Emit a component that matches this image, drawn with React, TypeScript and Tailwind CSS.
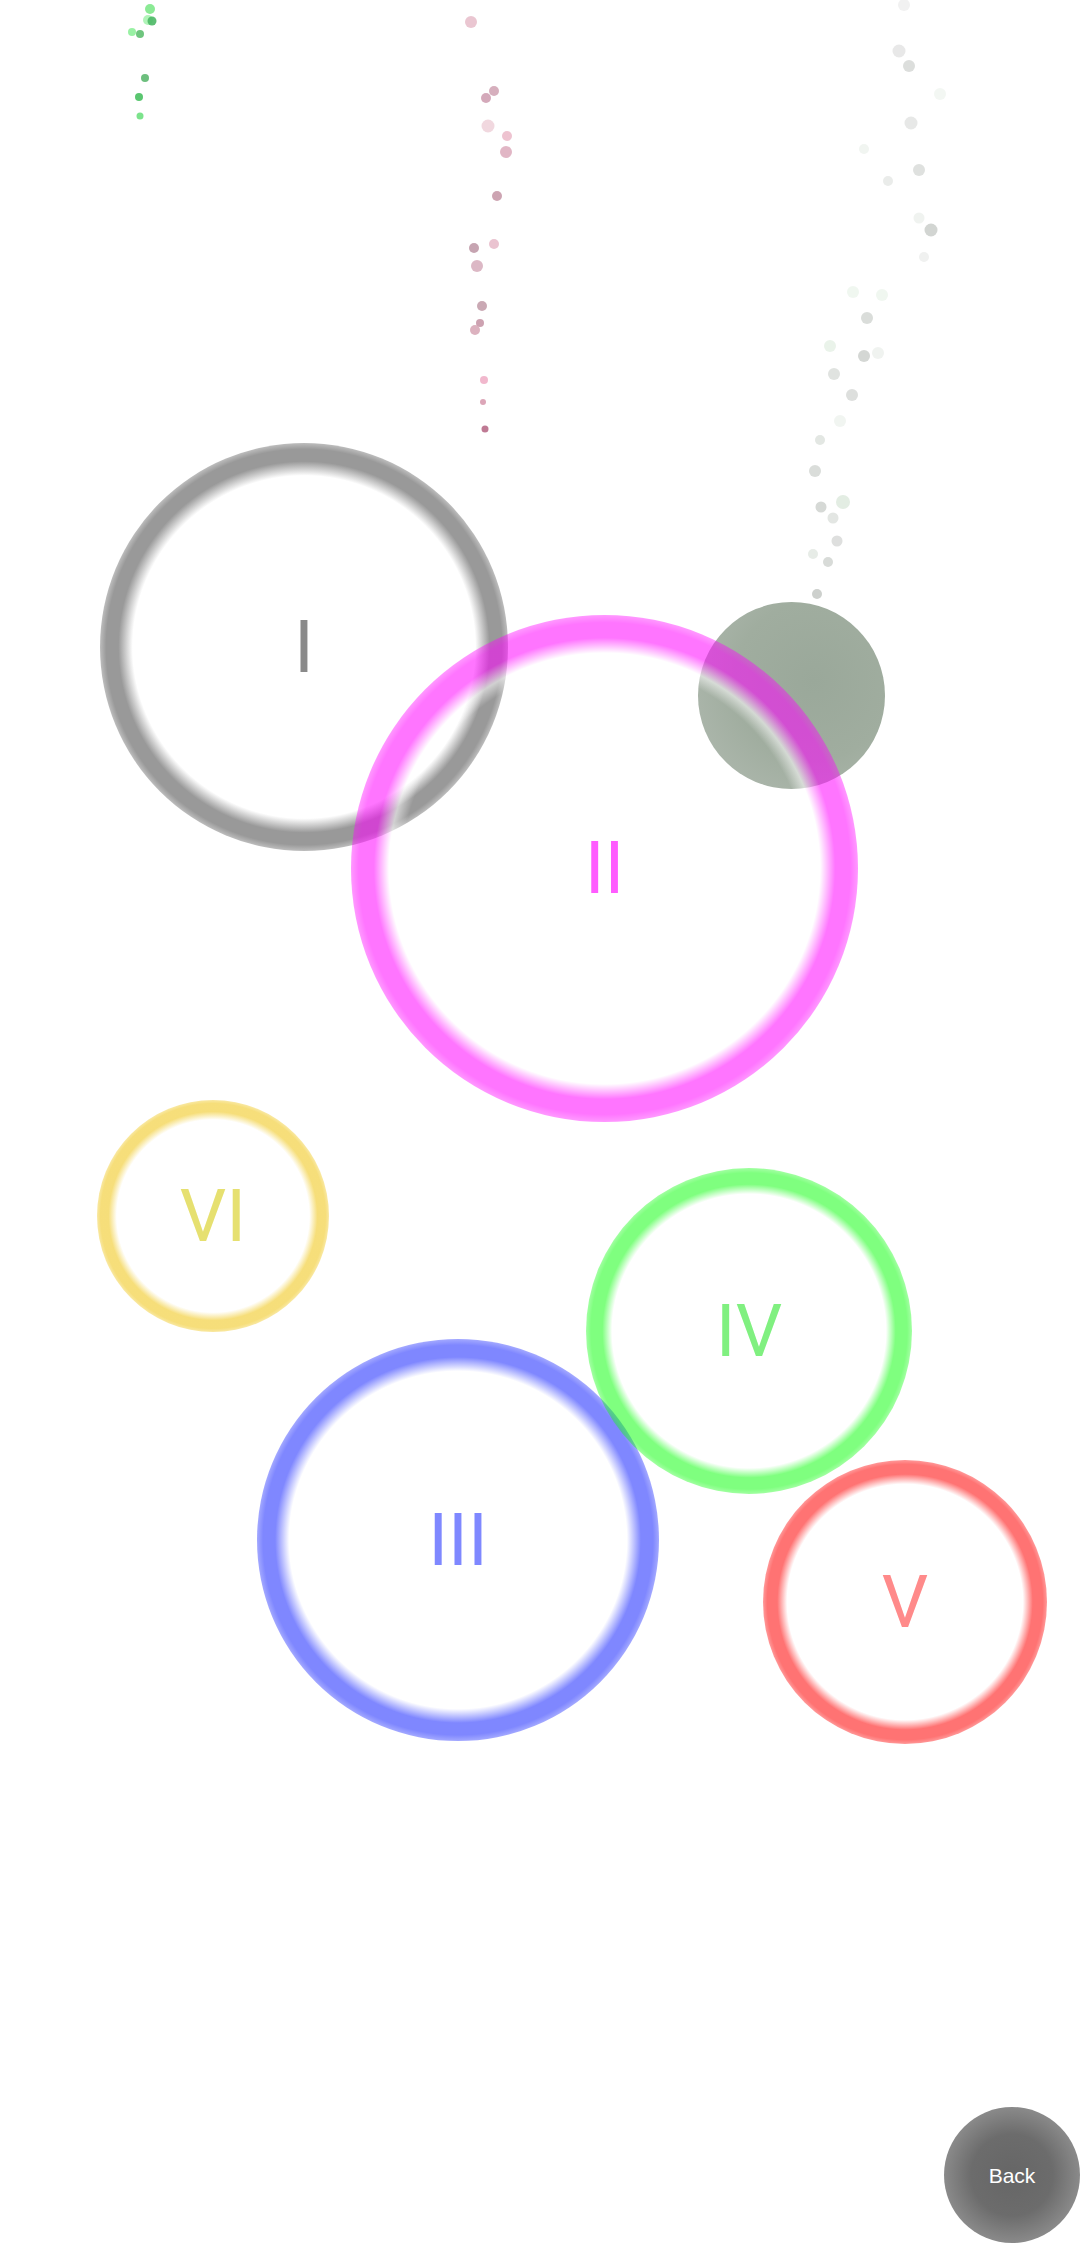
import React from 'react';

type Bubble = {
  label: string;
  box: string;
  ring: string;
  text: string;
};

// drawn in this order: later rings sit over earlier ones
const bubbles: Bubble[] = [
  {
    label: 'I',
    box: 'left-[100px] top-[443px] h-[408px] w-[408px]',
    ring: 'bg-[image:radial-gradient(circle_closest-side,transparent_79%,rgba(255,255,255,0.55)_84%,rgba(0,0,0,0.4)_91%,rgba(0,0,0,0.4)_97%,rgba(0,0,0,0.26)_100%)]',
    text: 'text-[#8a8a8a]',
  },
  {
    label: 'II',
    box: 'left-[351px] top-[615px] h-[507px] w-[507px]',
    ring: 'bg-[image:radial-gradient(circle_closest-side,transparent_80%,rgba(255,255,255,0.55)_85%,rgba(255,0,255,0.54)_91%,rgba(255,0,255,0.54)_97%,rgba(255,0,255,0.4)_100%)]',
    text: 'text-[#ff5cff]',
  },
  {
    label: 'VI',
    box: 'left-[97px] top-[1100px] h-[232px] w-[232px]',
    ring: 'bg-[image:radial-gradient(circle_closest-side,transparent_78%,rgba(255,255,255,0.55)_83%,rgba(238,192,0,0.52)_90%,rgba(238,192,0,0.52)_97%,rgba(238,192,0,0.36)_100%)]',
    text: 'text-[#e6e070]',
  },
  {
    label: 'III',
    box: 'left-[257px] top-[1339px] h-[402px] w-[402px]',
    ring: 'bg-[image:radial-gradient(circle_closest-side,transparent_79%,rgba(255,255,255,0.55)_84%,rgba(0,16,255,0.5)_91%,rgba(0,16,255,0.5)_97%,rgba(0,16,255,0.36)_100%)]',
    text: 'text-[#7f88ff]',
  },
  {
    label: 'IV',
    box: 'left-[586px] top-[1168px] h-[326px] w-[326px]',
    ring: 'bg-[image:radial-gradient(circle_closest-side,transparent_79%,rgba(255,255,255,0.55)_84%,rgba(0,255,0,0.5)_90%,rgba(0,255,0,0.5)_97%,rgba(0,255,0,0.36)_100%)]',
    text: 'text-[#80f080]',
  },
  {
    label: 'V',
    box: 'left-[763px] top-[1460px] h-[284px] w-[284px]',
    ring: 'bg-[image:radial-gradient(circle_closest-side,transparent_78%,rgba(255,255,255,0.55)_83%,rgba(255,0,0,0.55)_90%,rgba(255,0,0,0.55)_97%,rgba(255,0,0,0.4)_100%)]',
    text: 'text-[#ff8a8a]',
  },
];

type Dot = [number, number, number, string, number];

// trails of particles rising from the top of the screen
const dots: Dot[] = [
  [150, 9, 5, '#7ee88a', 0.9],
  [148, 20, 5, '#8ef09a', 0.7],
  [152, 21, 4.5, '#4cb866', 0.9],
  [132, 32, 4, '#8ef09a', 0.9],
  [140, 34, 4, '#5fbf70', 0.9],
  [145, 78, 4, '#5db870', 0.9],
  [139, 97, 4, '#48c060', 0.9],
  [140, 116, 3.5, '#6ee080', 0.9],

  [471, 22, 6, '#e8c0cc', 0.9],
  [494, 91, 5, '#d2a6b6', 0.9],
  [486, 98, 5, '#cfa0b2', 0.9],
  [488, 126, 6.5, '#f0d4dc', 0.9],
  [507, 136, 5, '#ecbccb', 0.9],
  [506, 152, 6, '#deaebf', 0.9],
  [497, 196, 5, '#c89aaa', 0.9],
  [474, 248, 5, '#c09aa8', 0.9],
  [494, 244, 5, '#e8bccb', 0.9],
  [477, 266, 6, '#d8b0bf', 0.9],
  [482, 306, 5, '#c4a0ac', 0.9],
  [480, 323, 4, '#c898a8', 0.9],
  [475, 330, 5, '#d8aab8', 0.9],
  [484, 380, 4, '#f0b0c8', 0.9],
  [483, 402, 3, '#d89cb0', 0.9],
  [485, 429, 3.5, '#b86c88', 0.9],

  [904, 5, 6, '#eeeeee', 0.8],
  [899, 51, 6.5, '#e6e6e6', 0.9],
  [909, 66, 6, '#d8dad8', 0.9],
  [940, 94, 6, '#f2f6f2', 0.9],
  [911, 123, 6.5, '#e4e6e4', 0.9],
  [864, 149, 5, '#f0f4f0', 0.9],
  [919, 170, 6, '#dcdedc', 0.9],
  [888, 181, 5, '#e8eae8', 0.9],
  [919, 218, 5.5, '#eef2ee', 0.9],
  [931, 230, 6.5, '#cdd0cd', 0.9],
  [924, 257, 5, '#eef0ee', 0.9],
  [853, 292, 6, '#eef6ee', 0.9],
  [882, 295, 6, '#eef6ee', 0.9],
  [867, 318, 6, '#d6d9d6', 0.9],
  [830, 346, 6, '#e8f2e8', 0.9],
  [864, 356, 6, '#cfd3cf', 0.9],
  [878, 353, 6, '#eef2ee', 0.9],
  [834, 374, 6, '#dde0dd', 0.9],
  [852, 395, 6, '#d9dcd9', 0.9],
  [840, 421, 6, '#f0f4f0', 0.9],
  [820, 440, 5, '#e0e4e0', 0.9],
  [815, 471, 6, '#d6d9d6', 0.9],
  [821, 507, 5.5, '#d2d5d2', 0.9],
  [843, 502, 7, '#e0ebe0', 0.9],
  [833, 518, 5.5, '#e0e3e0', 0.9],
  [837, 541, 5.5, '#dadcda', 0.9],
  [813, 554, 5, '#e4eae4', 0.9],
  [828, 562, 5, '#d4d7d4', 0.9],
  [817, 594, 5, '#c8cbc8', 0.9],
];

export default function App() {
  return (
    <div className="relative h-[2244px] w-[1080px] overflow-hidden bg-white font-['Roboto','Liberation_Sans',sans-serif]">
      <svg
        className="absolute left-0 top-0"
        width={1080}
        height={620}
        viewBox="0 0 1080 620"
      >
        {dots.map(([cx, cy, r, fill, op], i) => (
          <circle
            key={i}
            cx={cx}
            cy={cy}
            r={r}
            fill={fill}
            opacity={op}
          />
        ))}
      </svg>

      {/* emitter blob, sits under ring II */}
      <div className="absolute left-[698px] top-[602px] h-[187px] w-[187px] rounded-full bg-[image:radial-gradient(circle_at_62%_42%,#9aa89a_0%,#a0ad9f_50%,#b3bcb3_100%)]" />

      {bubbles.map((b) => (
        <div
          key={b.label}
          className={`absolute flex items-center justify-center rounded-full ${b.box} ${b.ring}`}
        >
          <span className={`text-[73px] font-normal leading-none ${b.text}`}>{b.label}</span>
        </div>
      ))}

      <button className="absolute left-[944px] top-[2107px] flex h-[136px] w-[136px] items-center justify-center rounded-full bg-[image:radial-gradient(circle_closest-side,#666666_0%,#6c6c6c_60%,#8a8a8a_100%)] font-['Liberation_Sans',sans-serif] text-[21px] leading-none text-white">
        Back
      </button>
    </div>
  );
}
